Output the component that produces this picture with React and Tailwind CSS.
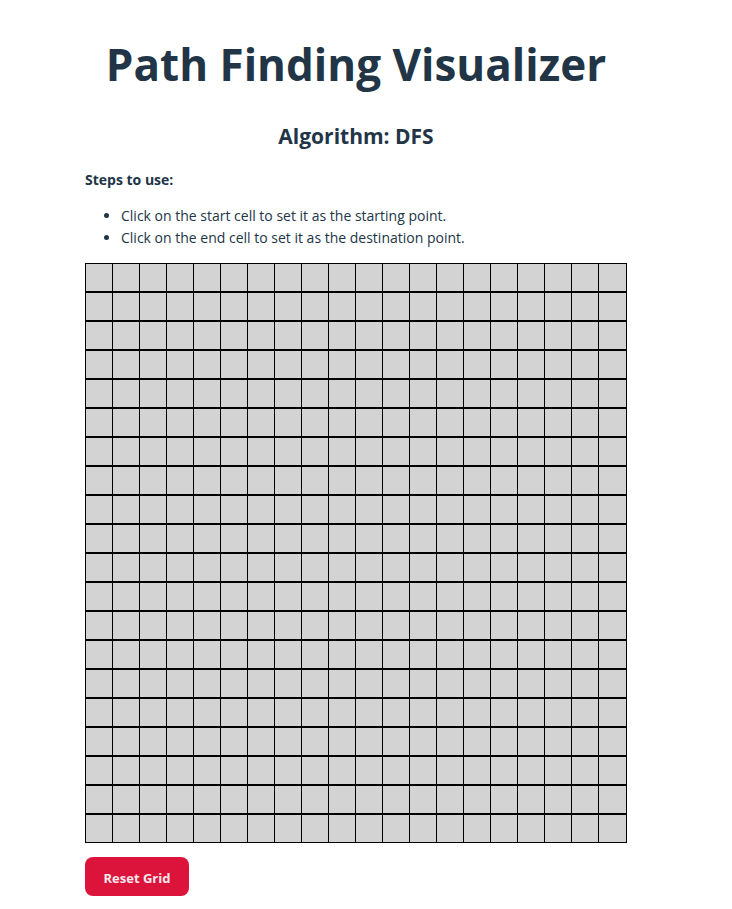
import { useState } from "react";

const ROWS = 20;
const COLS = 20;
const STEPS = [
  "Click on the start cell to set it as the starting point.",
  "Click on the end cell to set it as the destination point.",
];

function Cell({ row, col, state, onSelect }) {
  const fill =
    state === "start" ? "bg-green-500" : state === "end" ? "bg-red-500" : "bg-[#d3d3d3]";
  return (
    <button
      type="button"
      aria-label={`Row ${row + 1}, column ${col + 1}`}
      onClick={onSelect}
      className={`block h-[29px] w-[27px] border-y border-l border-black last:w-[29px] last:border-r ${fill}`}
    />
  );
}

export default function App() {
  const [start, setStart] = useState(null);
  const [end, setEnd] = useState(null);

  const select = (key) => {
    if (start === null) setStart(key);
    else if (end === null && key !== start) setEnd(key);
  };

  const reset = () => {
    setStart(null);
    setEnd(null);
  };

  return (
    <main className="flex justify-center bg-white pt-8 pr-5 pb-3 font-['Open_Sans','Noto_Sans',sans-serif] text-sm text-[#213547]">
      <div>
        <h1 className="text-center text-[44px] leading-[64px] font-bold">Path Finding Visualizer</h1>
        <h2 className="mt-[22px] text-center text-[21px] leading-9 font-bold">Algorithm: DFS</h2>
        <h3 className="mt-[15px] leading-[22px] font-bold">Steps to use:</h3>
        <ul className="mt-3.5 list-disc pl-9 leading-[22px]">
          {STEPS.map((step) => (
            <li key={step}>{step}</li>
          ))}
        </ul>
        <div className="mt-3.5">
          {Array.from({ length: ROWS }, (_, row) => (
            <div key={row} className="flex">
              {Array.from({ length: COLS }, (_, col) => {
                const key = row * COLS + col;
                return (
                  <Cell
                    key={key}
                    row={row}
                    col={col}
                    state={key === start ? "start" : key === end ? "end" : "empty"}
                    onSelect={() => select(key)}
                  />
                );
              })}
            </div>
          ))}
        </div>
        <button
          type="button"
          onClick={reset}
          className="mt-3.5 h-[39px] min-w-[104px] rounded-lg bg-[#dc143c] px-4 pt-1 text-[13px] font-bold text-white/90"
        >
          Reset Grid
        </button>
      </div>
    </main>
  );
}
